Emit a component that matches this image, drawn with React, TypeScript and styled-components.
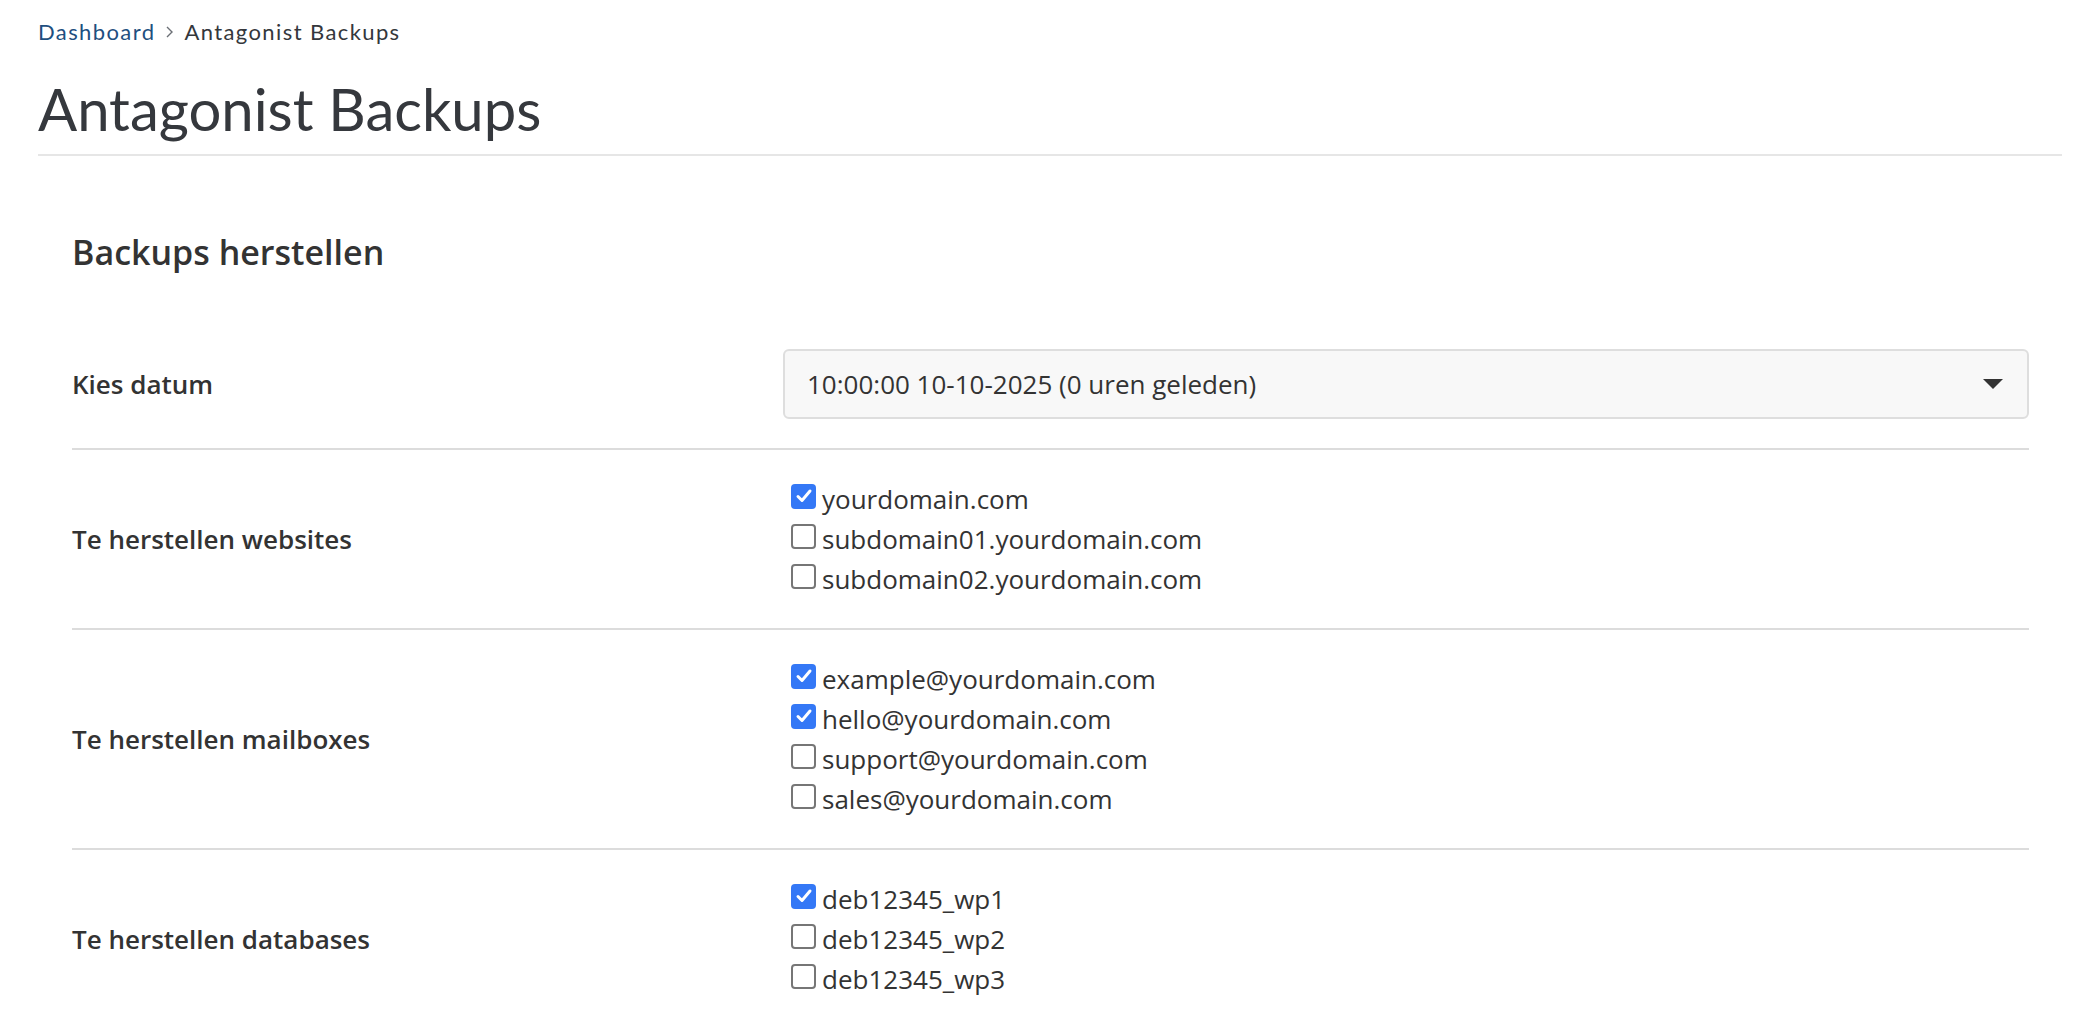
import styled, { createGlobalStyle } from 'styled-components'

const GlobalStyle = createGlobalStyle`
  body {
    margin: 0;
    background: #ffffff;
    font-family: "Open Sans", "Noto Sans", sans-serif;
    color: #333333;
  }
  * { box-sizing: border-box; }
`

const Page = styled.div`
  padding: 0 38px;
`

const Crumbs = styled.nav`
  display: flex;
  align-items: center;
  gap: 10px;
  padding-top: 20px;
  font-family: Lato, "Noto Sans", sans-serif;
  font-size: 22px;
  line-height: 24px;
  letter-spacing: 1.4px;
  color: #34373c;
`

const CrumbLink = styled.a`
  color: #1e4f7f;
  text-decoration: none;
`

const Title = styled.h1`
  margin: 30px 0 0;
  padding-bottom: 10px;
  border-bottom: 2px solid #e6e6e6;
  font-family: Lato, "Noto Sans", sans-serif;
  font-weight: 400;
  font-size: 58px;
  line-height: 70px;
  color: #35383d;
`

const Card = styled.section`
  padding: 74px 33px 0 34px;
`

const Heading = styled.h2`
  margin: 0 0 46px;
  font-size: 34px;
  line-height: 44px;
  font-weight: 600;
  color: #333333;
`

const Row = styled.div`
  display: grid;
  grid-template-columns: 711px 1fr;
  align-items: center;
  padding: 29px 0;
  border-bottom: 2px solid #dcdcdc;
  &:last-child {
    border-bottom: none;
  }
`

const Label = styled.div`
  font-size: 26px;
  line-height: 36px;
  font-weight: 600;
  color: #333333;
`

const Select = styled.div`
  display: flex;
  align-items: center;
  justify-content: space-between;
  height: 70px;
  padding: 0 24px 0 22px;
  background: #f8f8f8;
  border: 2px solid #dedede;
  border-radius: 6px;
  font-size: 26px;
  color: #333333;
`

const Caret = styled.span`
  width: 0;
  height: 0;
  border-left: 10px solid transparent;
  border-right: 10px solid transparent;
  border-top: 10px solid #333333;
`

const List = styled.div`
  display: flex;
  flex-direction: column;
  padding-left: 8px;
`

const Item = styled.label`
  display: flex;
  align-items: center;
  gap: 6px;
  height: 40px;
  font-size: 26px;
  color: #333333;
`

const Box = styled.span<{ $on: boolean }>`
  display: flex;
  align-items: center;
  justify-content: center;
  width: 25px;
  height: 25px;
  margin-top: -6px;
  border-radius: 4px;
  background: ${p => (p.$on ? '#3478f6' : '#ffffff')};
  border: ${p => (p.$on ? 'none' : '2px solid #767676')};
`

type Option = { name: string; on: boolean }

const Check = ({ name, on }: Option) => (
  <Item>
    <Box $on={on}>
      {on && (
        <svg width="18" height="18" viewBox="0 0 18 18">
          <path d="M3 9.5 L7 13.5 L15 4" fill="none" stroke="#ffffff" strokeWidth="3" strokeLinecap="round" strokeLinejoin="round" />
        </svg>
      )}
    </Box>
    {name}
  </Item>
)

const groups: { label: string; options: Option[] }[] = [
  {
    label: 'Te herstellen websites',
    options: [
      { name: 'yourdomain.com', on: true },
      { name: 'subdomain01.yourdomain.com', on: false },
      { name: 'subdomain02.yourdomain.com', on: false },
    ],
  },
  {
    label: 'Te herstellen mailboxes',
    options: [
      { name: 'example@yourdomain.com', on: true },
      { name: 'hello@yourdomain.com', on: true },
      { name: 'support@yourdomain.com', on: false },
      { name: 'sales@yourdomain.com', on: false },
    ],
  },
  {
    label: 'Te herstellen databases',
    options: [
      { name: 'deb12345_wp1', on: true },
      { name: 'deb12345_wp2', on: false },
      { name: 'deb12345_wp3', on: false },
    ],
  },
]

export default function App() {
  return (
    <>
      <GlobalStyle />
      <Page>
        <Crumbs>
          <CrumbLink href="#">Dashboard</CrumbLink>
          <svg width="9" height="14" viewBox="0 0 9 14">
            <path d="M2 2 L7 7 L2 12" fill="none" stroke="#6b6f75" strokeWidth="1.4" />
          </svg>
          <span>Antagonist Backups</span>
        </Crumbs>
        <Title>Antagonist Backups</Title>
        <Card>
          <Heading>Backups herstellen</Heading>
          <Row>
            <Label>Kies datum</Label>
            <Select>
              <span>10:00:00 10-10-2025 (0 uren geleden)</span>
              <Caret />
            </Select>
          </Row>
          {groups.map(g => (
            <Row key={g.label}>
              <Label>{g.label}</Label>
              <List>
                {g.options.map(o => (
                  <Check key={o.name} {...o} />
                ))}
              </List>
            </Row>
          ))}
        </Card>
      </Page>
    </>
  )
}
